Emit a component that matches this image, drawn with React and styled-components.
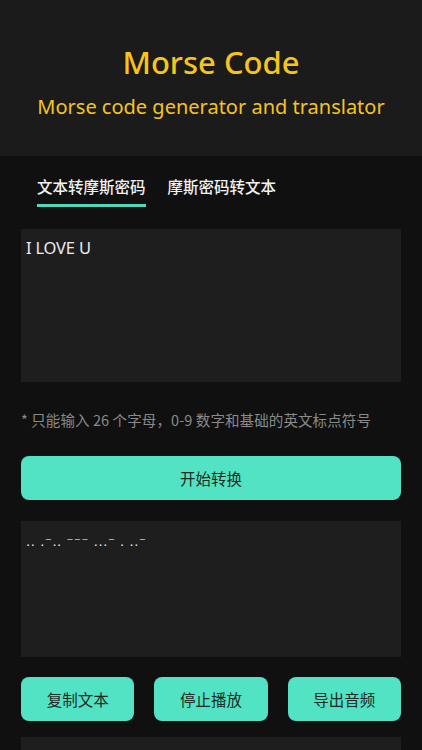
import styled, { createGlobalStyle } from 'styled-components';

const GlobalStyle = createGlobalStyle`
  html, body {
    margin: 0;
    padding: 0;
    background: #101010;
  }
  body {
    font-family: 'Noto Sans', 'Noto Sans CJK SC', sans-serif;
  }
`;

const App = () => {
  return (
    <Page>
      <GlobalStyle />
      <Header>
        <Title>Morse Code</Title>
        <SubTitle>Morse code generator and translator</SubTitle>
      </Header>
      <Main>
        <Tabs>
          <Tab $active>文本转摩斯密码</Tab>
          <Tab>摩斯密码转文本</Tab>
        </Tabs>
        <Box $height={153}>I LOVE U</Box>
        <Hint>* 只能输入 26 个字母，0-9 数字和基础的英文标点符号</Hint>
        <Button $wide>开始转换</Button>
        <Box $height={136} $morse>.. .⁻.. ⁻⁻⁻ ...⁻ . ..⁻</Box>
        <Actions>
          <Button>复制文本</Button>
          <Button>停止播放</Button>
          <Button>导出音频</Button>
        </Actions>
        <Box $height={120} />
      </Main>
    </Page>
  );
};

const Page = styled.div`
  width: 422px;
  height: 750px;
  overflow: hidden;
  background: #101010;
`;

const Header = styled.header`
  height: 156px;
  background: #1b1b1b;
  display: flex;
  flex-direction: column;
  align-items: center;
  padding-top: 41px;
  box-sizing: border-box;
  color: #f7c41b;
`;

const Title = styled.h1`
  margin: 0;
  font-size: 31px;
  font-weight: 500;
  line-height: 42px;
`;

const SubTitle = styled.h2`
  margin: 10px 0 0;
  font-size: 20px;
  font-weight: 400;
  line-height: 28px;
`;

const Main = styled.main`
  display: flex;
  flex-direction: column;
  padding: 0 21px;
`;

const Tabs = styled.div`
  display: flex;
  gap: 22px;
  padding: 18px 0 0 16px;
  margin-bottom: 22px;
`;

const Tab = styled.div`
  font-family: 'Noto Sans CJK SC', sans-serif;
  font-size: 15.5px;
  font-weight: 500;
  color: #f2f2f2;
  line-height: 24px;
  padding-bottom: 6px;
  border-bottom: 3px solid ${({ $active }) => ($active ? '#4fd9bc' : 'transparent')};
`;

const Box = styled.div`
  height: ${({ $height }) => $height}px;
  background: #1e1e1e;
  box-sizing: border-box;
  padding: ${({ $morse }) => ($morse ? '9px 5px' : '7px 5px')};
  color: #ececec;
  font-family: ${({ $morse }) => ($morse ? "'DejaVu Sans', sans-serif" : 'inherit')};
  font-size: ${({ $morse }) => ($morse ? '13px' : '16.5px')};
  letter-spacing: ${({ $morse }) => ($morse ? '0.6px' : '-0.2px')};
  line-height: 24px;
  flex-shrink: 0;
`;

const Hint = styled.p`
  margin: 27px 0 25px;
  font-family: 'Noto Sans CJK SC', sans-serif;
  font-size: 14.5px;
  letter-spacing: 0.1px;
  line-height: 22px;
  color: #8a8a8a;
`;

const Button = styled.button`
  ${({ $wide }) => ($wide ? 'width: 100%; margin-bottom: 21px;' : 'flex: 1;')}
  height: 44px;
  border: none;
  border-radius: 8px;
  background: #51e3c3;
  color: #1c2b27;
  font-family: 'Noto Sans CJK SC', sans-serif;
  font-size: 15.5px;
  cursor: pointer;
`;

const Actions = styled.div`
  display: flex;
  gap: 20px;
  margin: 20px 0 16px;
`;

export default App;
